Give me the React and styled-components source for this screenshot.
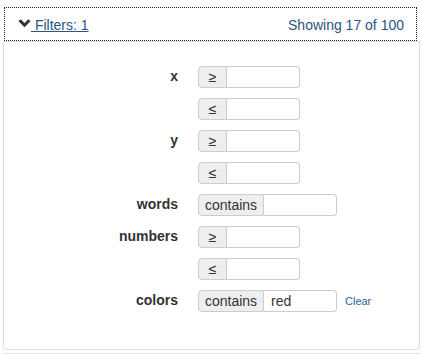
import React from 'react';
import styled, { createGlobalStyle } from 'styled-components';

const GlobalStyle = createGlobalStyle`
    html, body {
        margin: 0;
        padding: 0;
        background: #fff;
        font-family: "Liberation Sans", Arial, sans-serif;
        color: #333;
    }
`;

const filters = [
    { label: 'x', op: '≥', value: '' },
    { label: '', op: '≤', value: '' },
    { label: 'y', op: '≥', value: '' },
    { label: '', op: '≤', value: '' },
    { label: 'words', op: 'contains', value: '' },
    { label: 'numbers', op: '≥', value: '' },
    { label: '', op: '≤', value: '' },
    { label: 'colors', op: 'contains', value: 'red', clear: true },
];

function ChevronDown() {
    return (
        <svg width="13" height="9" viewBox="0 0 13 9">
            <path d="M0.5 2.2 L2.6 0.2 L6.5 4 L10.4 0.2 L12.5 2.2 L6.5 8.2 Z" fill="#333" />
        </svg>
    );
}

function App() {
    return (
        <Page>
            <GlobalStyle />
            <Heading>
                <Toggle>
                    <ChevronDown />
                    <FilterLink href="#"> Filters: 1</FilterLink>
                </Toggle>
                <Count>Showing 17 of 100</Count>
            </Heading>
            <Body>
                <Form>
                    {filters.map((f, i) => (
                        <React.Fragment key={i}>
                            <Label>{f.label}</Label>
                            <Field>
                                <InputGroup>
                                    <Addon wide={f.op === 'contains'}>{f.op}</Addon>
                                    <Input defaultValue={f.value} />
                                </InputGroup>
                                {f.clear && <ClearLink href="#">Clear</ClearLink>}
                            </Field>
                        </React.Fragment>
                    ))}
                </Form>
            </Body>
            <NextPanel />
        </Page>
    );
}

const Page = styled.div`
    padding: 7px 2px 0 3px;
`;

const Heading = styled.div`
    box-sizing: border-box;
    width: 413px;
    height: 34px;
    margin-left: 1px;
    border: 1px dotted #222;
    padding: 0 12px 0 13px;
    display: flex;
    align-items: center;
    justify-content: space-between;
    font-size: 14px;
`;

const Toggle = styled.div`
    display: flex;
    align-items: center;
    margin-top: 1px;

    svg {
        margin-top: -2px;
    }
`;

const FilterLink = styled.a`
    color: #2a5582;
    text-decoration: underline;
    white-space: pre;
`;

const Count = styled.span`
    color: #2a5582;
    margin-top: 1px;
`;

const Body = styled.div`
    box-sizing: border-box;
    width: 417px;
    height: 309px;
    border: 1px solid #ddd;
    border-radius: 0 0 4px 4px;
    padding-top: 24px;
`;

const Form = styled.div`
    display: grid;
    grid-template-columns: 174px auto;
    column-gap: 20px;
    row-gap: 10px;
    align-items: center;
`;

const Label = styled.div`
    text-align: right;
    font-weight: bold;
    font-size: 14px;
    color: #333;
    margin-top: -2px;
`;

const Field = styled.div`
    display: flex;
    align-items: center;
    gap: 8px;
`;

const InputGroup = styled.div`
    display: flex;
    height: 22px;
`;

const Addon = styled.span`
    box-sizing: border-box;
    width: ${props => (props.wide ? '66px' : '29px')};
    height: 22px;
    display: flex;
    align-items: center;
    justify-content: center;
    background: #eee;
    border: 1px solid #ccc;
    border-radius: 4px 0 0 4px;
    font-size: 14px;
    color: #333;
`;

const Input = styled.input`
    box-sizing: border-box;
    width: 73px;
    height: 22px;
    border: 1px solid #ccc;
    border-left: none;
    border-radius: 0 4px 4px 0;
    padding: 0 7px;
    font-family: "Liberation Sans", Arial, sans-serif;
    font-size: 14px;
    color: #333;
    outline: none;
`;

const ClearLink = styled.a`
    font-size: 11px;
    color: #2a6496;
    text-decoration: none;
`;

const NextPanel = styled.div`
    width: 417px;
    margin-top: 3px;
    border-top: 1px solid #e4e4e4;
`;

export default App;
